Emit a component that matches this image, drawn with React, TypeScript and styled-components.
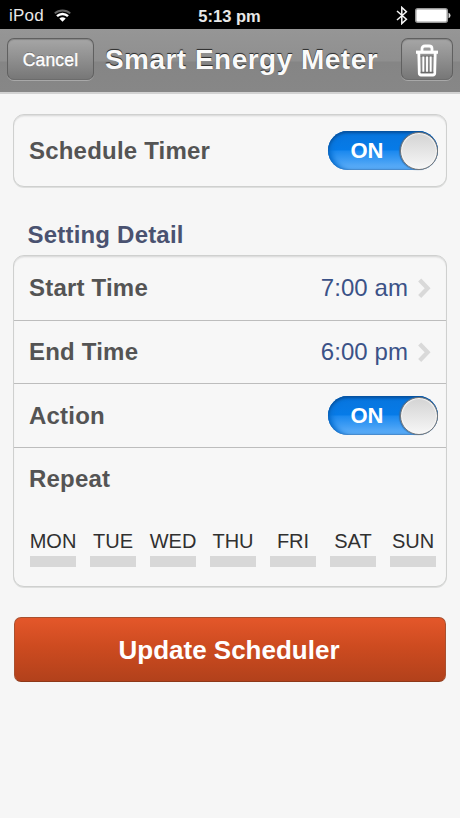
import React, { useState } from "react";
import styled, { createGlobalStyle } from "styled-components";

const GlobalStyle = createGlobalStyle`
  * { box-sizing: border-box; }
  body {
    margin: 0;
    background: #f6f6f6;
    font-family: "Liberation Sans", Arial, Helvetica, sans-serif;
  }
  button { font-family: inherit; padding: 0; margin: 0; border: 0; cursor: pointer; }
`;

const Screen = styled.div`
  display: flex;
  flex-direction: column;
  width: 460px;
  height: 818px;
  overflow: hidden;
  background: #f6f6f6;
`;

const StatusBar = styled.header`
  display: grid;
  grid-template-columns: 1fr auto 1fr;
  align-items: center;
  height: 29px;
  padding: 2px 9px 0 9px;
  background: #000;
  color: #e8e8e8;
`;

const StatusGroup = styled.div<{ $end?: boolean }>`
  display: flex;
  align-items: center;
  justify-content: ${(p) => (p.$end ? "flex-end" : "flex-start")};
  gap: ${(p) => (p.$end ? "7px" : "10px")};
  font-size: 17px;
  letter-spacing: 0.25px;
  line-height: 20px;
`;

const Clock = styled.span`
  font-size: 16.5px;
  font-weight: 700;
  line-height: 20px;
  margin-right: 1px;
`;

const NavBar = styled.nav`
  display: flex;
  align-items: center;
  justify-content: space-between;
  height: 65px;
  padding: 0 7px 3px;
  border-bottom: 2px solid #d2d2d2;
  background: linear-gradient(#969696 0, #8f8f8f 32px, #858585 33px, #878787 63px);
`;

const NavButton = styled.button<{ $width: number }>`
  display: flex;
  align-items: center;
  justify-content: center;
  width: ${(p) => p.$width}px;
  height: 42px;
  padding-top: 2px;
  border: 1px solid #606060;
  border-bottom-color: #6c6c6c;
  border-radius: 7px;
  background: linear-gradient(#a6a6a6, #8f8f8f 50%, #777 100%);
  box-shadow: 0 1px 0 #a8a8a8, inset 0 1px 1px #858585;
  color: #fff;
  font-size: 17.5px;
  line-height: 20px;
  letter-spacing: 0.15px;
  -webkit-text-stroke: 0.35px #fff;
  text-shadow: 0 -1px 0 #666;
`;

const Title = styled.h1`
  margin: 2px 0 0 -12px;
  color: #fafafa;
  font-size: 28px;
  line-height: 34px;
  letter-spacing: 0.48px;
  white-space: nowrap;
  text-shadow: 0 -1px 0 #333, 0 -1px 1px #444;
`;

const Content = styled.main`
  display: flex;
  flex-direction: column;
  padding: 20px 13px 0;
`;

const Card = styled.section`
  border: 1px solid #cfd0cf;
  border-radius: 11px;
  background: #f7f7f7;
  box-shadow: inset 0 1px 0 #dedede, inset 0 2px 1px #ececec, 0 1px 0 #dedfde;
`;

const Row = styled.div<{ $height: number; $divided?: boolean }>`
  display: flex;
  align-items: center;
  justify-content: space-between;
  height: ${(p) => p.$height}px;
  padding: 0 8px 0 15px;
  border-top: ${(p) => (p.$divided ? "1px solid #bdbdbd" : "0")};
`;

const Label = styled.span`
  color: #545454;
  font-size: 24px;
  font-weight: 700;
  line-height: 28px;
  letter-spacing: 0.2px;
`;

const SectionTitle = styled.h2`
  margin: 34px 0 6px 14.5px;
  color: #4a5270;
  font-size: 24px;
  line-height: 28px;
  letter-spacing: 0.2px;
`;

const TimeValue = styled.span`
  display: flex;
  align-items: center;
  gap: 10px;
  padding-right: 7px;
  color: #3b5287;
  font-size: 24px;
  line-height: 28px;
  letter-spacing: 0.07px;
`;

const Track = styled.button<{ $on: boolean }>`
  display: flex;
  align-items: center;
  flex-direction: ${(p) => (p.$on ? "row" : "row-reverse")};
  width: 110px;
  height: 39px;
  border-radius: 20px;
  background: linear-gradient(#0874dc 0, #067be8 48%, #1c89ef 52%, #3f9df4 76%, #66b2f8 100%);
  box-shadow: inset 0 2px 3px #064e99, inset 5px 0 5px -1px #0a73d6, inset 0 -1px 1px #6698cb;
`;

const TrackText = styled.span`
  flex: 1;
  padding: 1px 0 0 6px;
  color: #fff;
  font-size: 22px;
  font-weight: 700;
  line-height: 26px;
  text-align: center;
`;

const Knob = styled.span`
  width: 38px;
  height: 38px;
  border: 1px solid #777;
  border-radius: 50%;
  background: linear-gradient(#d3d3d3, #e5e5e5 50%, #f7f7f7);
  box-shadow: inset 0 0 1px 1px #f8f8f8, -1px 0 1px #306ba5;
`;

const RepeatBlock = styled.div`
  height: 139px;
  padding: 17px 10px 0 16px;
  border-top: 1px solid #bdbdbd;

  ${Label} { display: block; margin-left: -1px; }
`;

const Days = styled.div`
  display: flex;
  justify-content: space-between;
  margin-top: 37px;
`;

const Day = styled.button<{ $active: boolean }>`
  display: flex;
  flex-direction: column;
  align-items: center;
  gap: 3px;
  width: 46px;
  background: none;
  color: #303030;
  font-size: 20px;
  line-height: 23px;

  &::after {
    content: "";
    width: 46px;
    height: 11px;
    background: ${(p) => (p.$active ? "#3298f4" : "#d8d8d8")};
  }
`;

const UpdateButton = styled.button`
  height: 65px;
  margin: 30px 1px 0;
  padding-right: 2px;
  border: 1px solid #a9502f;
  border-bottom-color: #8e3818;
  border-radius: 7px;
  background: linear-gradient(#e4572a, #cd4b20 45%, #b2411b);
  color: #fff;
  font-size: 26px;
  font-weight: 700;
  line-height: 30px;
`;

const Wifi = () => (
  <svg width="17" height="13" viewBox="0 0 17 13" fill="none">
    <path d="M.8 4.4C5 .4 12 .4 16.2 4.4" stroke="#666" strokeWidth="2" />
    <path d="M3 7.2C6 4.2 11 4.2 14 7.2" stroke="#fff" strokeWidth="2.4" />
    <path d="M5.3 9.5Q8.5 6.8 11.7 9.5L8.5 12.8Z" fill="#fff" />
  </svg>
);

const Bluetooth = () => (
  <svg width="12" height="19" viewBox="0 0 12 19" fill="none" stroke="#f4f4f4" strokeWidth="1.5">
    <path d="M1 5L10.4 13.3L5.8 17.6V1.4L10.4 5.7L1 14" />
  </svg>
);

const Battery = () => (
  <svg width="36" height="15" viewBox="0 0 36 15">
    <rect x=".75" y=".75" width="31.5" height="13.5" rx="2" fill="#fff" stroke="#999" strokeWidth="1.5" />
    <path d="M33.5 4.8Q35.5 5.3 35.5 7.5T33.5 10.2Z" fill="#ddd" />
  </svg>
);

const Trash = () => (
  <svg width="24" height="33" viewBox="0 0 24 33" fill="none" stroke="#fff">
    <path d="M7 7V4.8Q7 2 10 2H14Q17 2 17 4.8V7" strokeWidth="2.8" />
    <path d="M1 8.2H23" strokeWidth="3.2" />
    <path d="M3.8 9L4.3 29.5Q4.4 31 6 31H18Q19.6 31 19.7 29.5L20.2 9" strokeWidth="2.8" />
    <path d="M5.6 12.2H18.4M5.6 28.3H18.4" stroke="#666" strokeWidth="1" />
    <path d="M8.3 12.5V27.7M12 12.5V27.7M15.7 12.5V27.7" strokeWidth="1.9" />
  </svg>
);

const Chevron = () => (
  <svg width="13" height="20" viewBox="0 0 13 20" fill="none">
    <path d="M1.7 2L9.6 10.2L1.7 18.4" stroke="#d9d9d9" strokeWidth="4.3" />
  </svg>
);

function Toggle({ label }: { label: string }) {
  const [on, setOn] = useState(true);
  return (
    <Track type="button" role="switch" aria-label={label} aria-checked={on} $on={on} onClick={() => setOn(!on)}>
      <TrackText>{on ? "ON" : "OFF"}</TrackText>
      <Knob />
    </Track>
  );
}

const DAY_NAMES = ["MON", "TUE", "WED", "THU", "FRI", "SAT", "SUN"];

export default function App() {
  const [days, setDays] = useState<string[]>([]);
  const toggleDay = (day: string) =>
    setDays((current) => (current.includes(day) ? current.filter((d) => d !== day) : [...current, day]));

  return (
    <>
      <GlobalStyle />
      <Screen>
        <StatusBar>
          <StatusGroup>
            iPod
            <Wifi />
          </StatusGroup>
          <Clock>5:13 pm</Clock>
          <StatusGroup $end>
            <Bluetooth />
            <Battery />
          </StatusGroup>
        </StatusBar>
        <NavBar>
          <NavButton $width={87}>Cancel</NavButton>
          <Title>Smart Energy Meter</Title>
          <NavButton $width={52} aria-label="Delete">
            <Trash />
          </NavButton>
        </NavBar>
        <Content>
          <Card>
            <Row $height={71}>
              <Label>Schedule Timer</Label>
              <Toggle label="Schedule Timer" />
            </Row>
          </Card>
          <SectionTitle>Setting Detail</SectionTitle>
          <Card>
            <Row $height={64}>
              <Label>Start Time</Label>
              <TimeValue>
                7:00 am
                <Chevron />
              </TimeValue>
            </Row>
            <Row $height={63} $divided>
              <Label>End Time</Label>
              <TimeValue>
                6:00 pm
                <Chevron />
              </TimeValue>
            </Row>
            <Row $height={64} $divided>
              <Label>Action</Label>
              <Toggle label="Action" />
            </Row>
            <RepeatBlock>
              <Label>Repeat</Label>
              <Days>
                {DAY_NAMES.map((day) => (
                  <Day key={day} type="button" $active={days.includes(day)} onClick={() => toggleDay(day)}>
                    {day}
                  </Day>
                ))}
              </Days>
            </RepeatBlock>
          </Card>
          <UpdateButton type="button">Update Scheduler</UpdateButton>
        </Content>
      </Screen>
    </>
  );
}
